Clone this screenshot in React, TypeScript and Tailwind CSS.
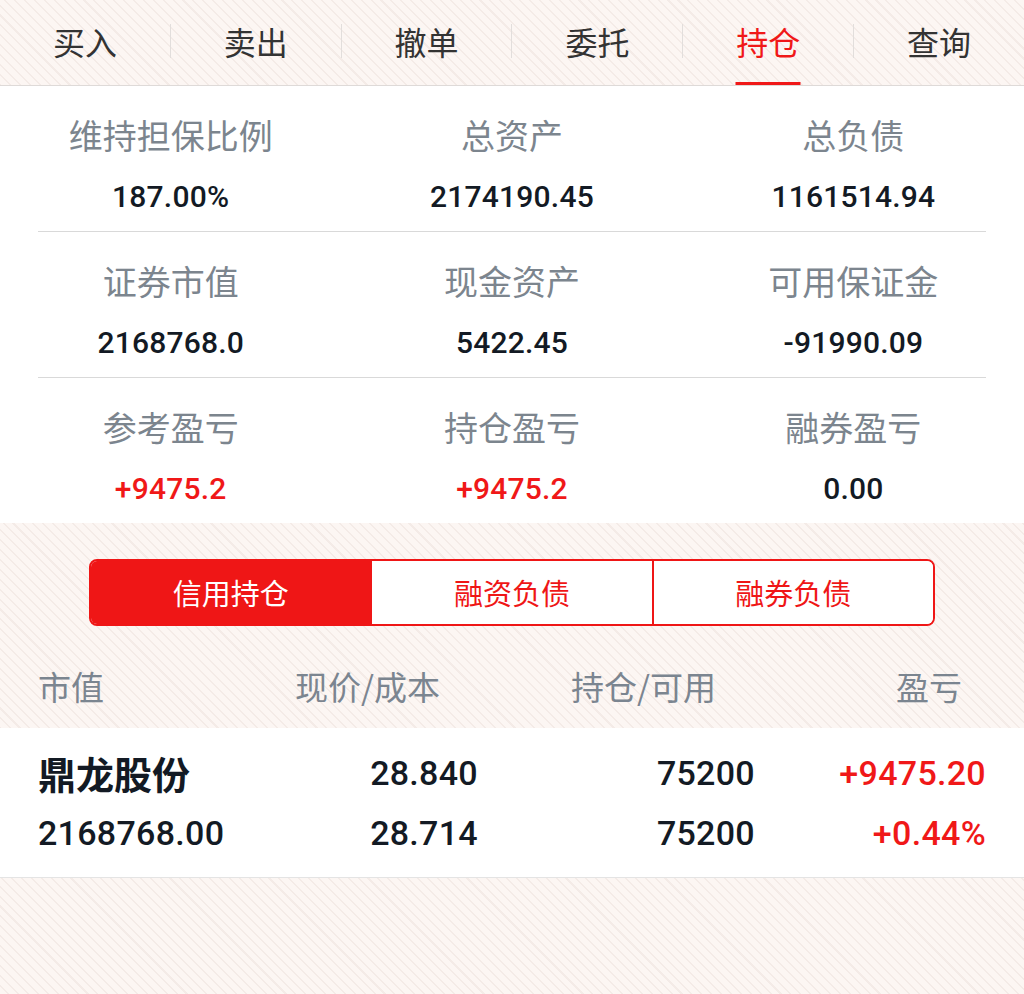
import React from 'react';

const tabs = ['买入', '卖出', '撤单', '委托', '持仓', '查询'];

const stats: { label: string; value: string; red?: boolean }[][] = [
  [
    { label: '维持担保比例', value: '187.00%' },
    { label: '总资产', value: '2174190.45' },
    { label: '总负债', value: '1161514.94' },
  ],
  [
    { label: '证券市值', value: '2168768.0' },
    { label: '现金资产', value: '5422.45' },
    { label: '可用保证金', value: '-91990.09' },
  ],
  [
    { label: '参考盈亏', value: '+9475.2', red: true },
    { label: '持仓盈亏', value: '+9475.2', red: true },
    { label: '融券盈亏', value: '0.00' },
  ],
];

const segments = ['信用持仓', '融资负债', '融券负债'];

const stripes =
  'bg-[#fcf6f3] bg-[repeating-linear-gradient(45deg,#fcf6f3_0px,#fcf6f3_5.5px,#f4ebe7_5.5px,#f4ebe7_7px)]';

const cjk = "font-['Noto_Sans_CJK_SC',sans-serif]";
const num = "font-['Roboto','Noto_Sans_CJK_SC',sans-serif]";

export default function App() {
  const active = 4;
  const seg = 0;

  return (
    <div className={`w-full min-h-[994px] ${stripes} ${cjk}`}>
      {/* Top tabs */}
      <div className="flex items-center h-[86px] border-b border-[#dedad8]">
        {tabs.map((t, i) => (
          <React.Fragment key={t}>
            {i > 0 && <div className="w-px h-[34px] mb-[3px] bg-[#e2dedc]" />}
            <div className="relative flex-1 h-full flex items-center justify-center pb-[4px]">
              <span
                className={`text-[32px] leading-[40px] ${
                  i === active ? 'text-[#f01818]' : 'text-[#333333]'
                }`}
              >
                {t}
              </span>
              {i === active && (
                <span className="absolute bottom-0 left-1/2 -translate-x-1/2 w-[65px] h-[3px] bg-[#f01818]" />
              )}
            </div>
          </React.Fragment>
        ))}
      </div>

      {/* Account summary */}
      <div className="bg-white">
        {stats.map((row, r) => (
          <div key={r}>
            {r > 0 && <div className="mx-[38px] h-px bg-[#d9d9d9]" />}
            <div className="grid grid-cols-3 pt-[29px] pb-[16px]">
              {row.map((s) => (
                <div key={s.label} className="flex flex-col items-center">
                  <span className="text-[34px] leading-[40px] text-[#7c858e]">{s.label}</span>
                  <span
                    className={`mt-[24px] text-[30px] leading-[36px] font-medium tracking-[0.2px] ${num} ${
                      s.red ? 'text-[#f01818]' : 'text-[#131a24]'
                    }`}
                  >
                    {s.value}
                  </span>
                </div>
              ))}
            </div>
          </div>
        ))}
      </div>

      {/* Segment control + column header */}
      <div className="pt-[36px]">
        <div className="mx-[89px] flex h-[67px] rounded-[8px] border-2 border-[#ef1616] overflow-hidden">
          {segments.map((s, i) => (
            <div
              key={s}
              className={`flex-1 flex items-center justify-center text-[29px] ${
                i > 0 ? 'border-l-2 border-[#ef1616]' : ''
              } ${i === seg ? 'bg-[#ef1616] text-white' : 'bg-white text-[#ef1616]'}`}
            >
              {s}
            </div>
          ))}
        </div>

        <div className="grid grid-cols-[257px_276px_1fr_auto] pl-[38px] pr-[62px] pt-[40px] pb-[22px] text-[33px] leading-[40px] text-[#7b8590]">
          <span>市值</span>
          <span>现价/成本</span>
          <span>持仓/可用</span>
          <span>盈亏</span>
        </div>
      </div>

      {/* Position row */}
      <div className="bg-white border-b border-[#e4e4e4]">
        <div
          className={`grid grid-cols-[300px_140px_277px_1fr] gap-y-[16px] px-[38px] pt-[23px] pb-[22px] text-[34px] leading-[44px] font-medium tracking-[0.3px] text-[#131a24] ${num}`}
        >
          <span className={`${cjk} text-[38px] font-semibold tracking-normal`}>鼎龙股份</span>
          <span className="text-right">28.840</span>
          <span className="text-right">75200</span>
          <span className="text-right text-[#f01818]">+9475.20</span>
          <span>2168768.00</span>
          <span className="text-right">28.714</span>
          <span className="text-right">75200</span>
          <span className="text-right text-[#f01818]">+0.44%</span>
        </div>
      </div>
    </div>
  );
}
